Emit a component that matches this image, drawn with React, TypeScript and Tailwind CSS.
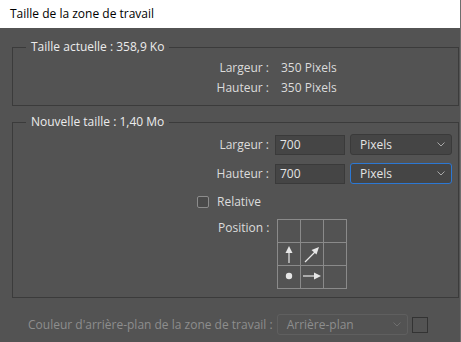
import React from 'react';

const font = { fontFamily: '"Open Sans", "Noto Sans", sans-serif' };

function Chevron({ className = '' }: { className?: string }) {
  return (
    <svg width="8" height="5" viewBox="0 0 8 5" className={className}>
      <path d="M0.5 0.5 L4 4 L7.5 0.5" fill="none" stroke="currentColor" strokeWidth="1" />
    </svg>
  );
}

function Select({ value, focused = false }: { value: string; focused?: boolean }) {
  return (
    <div
      className={`w-[102px] h-[21px] rounded-[3px] bg-[#454545] border flex items-center justify-between pl-[9px] pr-[6px] text-[#e4e4e4] ${
        focused ? 'border-[#2c78d4]' : 'border-[#3a3a3a]'
      }`}
    >
      <span>{value}</span>
      <Chevron className="text-[#a8a8a8]" />
    </div>
  );
}

function Input({ value }: { value: string }) {
  return (
    <div className="w-[70px] h-[20px] bg-[#454545] border border-[#3a3a3a] flex items-center pl-[4px] text-[#e4e4e4]">
      {value}
    </div>
  );
}

function Cell({ children }: { children?: React.ReactNode }) {
  return <div className="w-[23px] h-[23px] flex items-center justify-center">{children}</div>;
}

function AnchorGrid() {
  const stroke = '#e6e6e6';
  return (
    <div className="relative w-[70px] h-[70px] border border-[#8a8a8a] grid grid-cols-3 grid-rows-3">
      {/* grid lines */}
      <div className="absolute left-[22px] top-0 bottom-0 w-px bg-[#8a8a8a]" />
      <div className="absolute left-[45px] top-0 bottom-0 w-px bg-[#8a8a8a]" />
      <div className="absolute top-[22px] left-0 right-0 h-px bg-[#8a8a8a]" />
      <div className="absolute top-[45px] left-0 right-0 h-px bg-[#8a8a8a]" />
      <Cell />
      <Cell />
      <Cell />
      <Cell>
        <svg width="23" height="23" viewBox="0 0 23 23">
          <line x1="11" y1="20" x2="11" y2="8" stroke={stroke} strokeWidth="1.2" />
          <path d="M7.5 10 L11 3 L14.5 10 Z" fill={stroke} />
        </svg>
      </Cell>
      <Cell>
        <svg width="23" height="23" viewBox="0 0 23 23">
          <line x1="4" y1="19" x2="14" y2="9" stroke={stroke} strokeWidth="1.2" />
          <path d="M10.5 7 L18 4 L15.5 11.5 Z" fill={stroke} />
        </svg>
      </Cell>
      <Cell />
      <Cell>
        <svg width="23" height="23" viewBox="0 0 23 23">
          <circle cx="11" cy="11" r="3.2" fill={stroke} />
        </svg>
      </Cell>
      <Cell>
        <svg width="23" height="23" viewBox="0 0 23 23">
          <line x1="2" y1="11" x2="14" y2="11" stroke={stroke} strokeWidth="1.2" />
          <path d="M13 7.5 L20 11 L13 14.5 Z" fill={stroke} />
        </svg>
      </Cell>
      <Cell />
    </div>
  );
}

export default function App() {
  return (
    <div
      className="w-[461px] h-[342px] bg-[#535353] text-[12px] leading-[16px] text-[#dcdcdc] overflow-hidden border-r border-[#6e6e6e]"
      style={font}
    >
      {/* Barre de titre */}
      <div className="h-[28px] bg-white text-black flex items-center pl-[10px]">
        Taille de la zone de travail
      </div>

      <div className="pl-[12px] pt-[11px]">
        {/* Taille actuelle */}
        <fieldset className="w-[447px] border border-[#3b3b3b] pt-[3px] pb-[7px]">
          <legend className="ml-[13px] px-[5px] text-[#ececec]">Taille actuelle : 358,9 Ko</legend>
          <div className="flex flex-col">
            <div className="flex h-[20px] items-center">
              <span className="w-[256px] text-right">Largeur :</span>
              <span className="ml-[12px]">350 Pixels</span>
            </div>
            <div className="flex h-[20px] items-center">
              <span className="w-[256px] text-right">Hauteur :</span>
              <span className="ml-[12px]">350 Pixels</span>
            </div>
          </div>
        </fieldset>

        {/* Nouvelle taille */}
        <fieldset className="mt-[8px] w-[447px] border border-[#3b3b3b] pt-[4px] pb-[8px]">
          <legend className="ml-[13px] px-[5px] text-[#ececec]">Nouvelle taille : 1,40 Mo</legend>
          <div className="flex flex-col gap-[8px]">
            <div className="flex items-center">
              <span className="w-[256px] text-right">Largeur :</span>
              <div className="ml-[6px]">
                <Input value="700" />
              </div>
              <div className="ml-[5px]">
                <Select value="Pixels" />
              </div>
            </div>
            <div className="flex items-center">
              <span className="w-[256px] text-right">Hauteur :</span>
              <div className="ml-[6px]">
                <Input value="700" />
              </div>
              <div className="ml-[5px]">
                <Select value="Pixels" focused />
              </div>
            </div>
          </div>

          <div className="flex items-center mt-[10px] pl-[184px]">
            <div className="w-[12px] h-[12px] rounded-[2px] border border-[#8c8c8c] bg-[#4a4a4a]" />
            <span className="ml-[8px]">Relative</span>
          </div>

          <div className="flex mt-[9px] pl-[205px]">
            <span className="mt-[1px]">Position :</span>
            <div className="ml-[8px]">
              <AnchorGrid />
            </div>
          </div>
        </fieldset>

        {/* Couleur d'arrière-plan */}
        <div className="flex items-center mt-[16px] pl-[16px] text-[#8e8e8e]">
          <span>Couleur d'arrière-plan de la zone de travail :</span>
          <div className="ml-[4px] w-[131px] h-[21px] rounded-[3px] border border-[#5f5f5f] flex items-center justify-between pl-[9px] pr-[6px]">
            <span>Arrière-plan</span>
            <Chevron className="text-[#6e6e6e]" />
          </div>
          <div className="ml-[4px] w-[16px] h-[16px] border border-[#333333]" />
        </div>
      </div>
    </div>
  );
}
